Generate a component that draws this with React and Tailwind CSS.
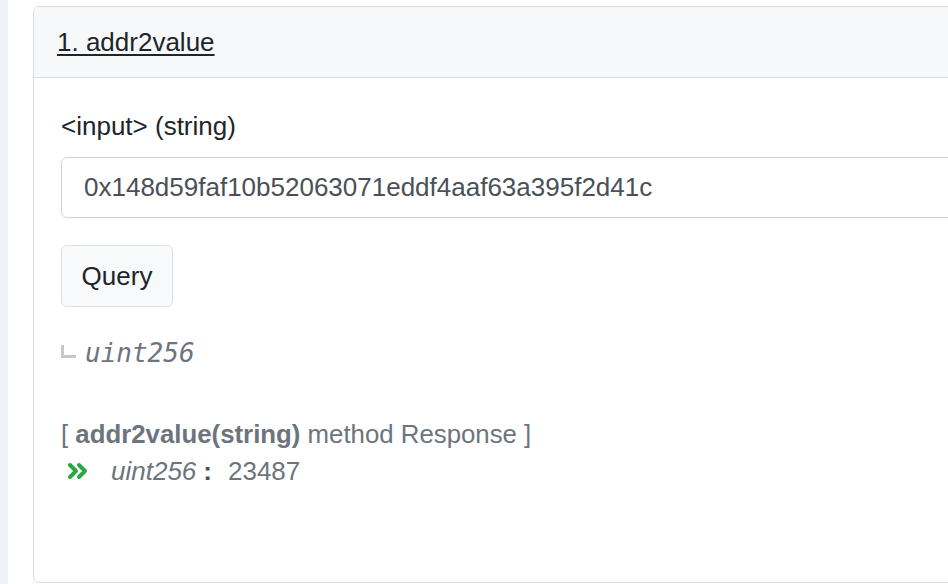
export default function App() {
  const sans = { fontFamily: '"Liberation Sans", Arial, sans-serif' };
  return (
    <div className="w-[948px] h-[584px] overflow-hidden flex bg-white" style={sans}>
      <div className="w-[8px] h-full bg-[#f0f2f5] shrink-0" />
      <div className="pl-[25px] pt-[6px] shrink-0">
        <div className="w-[1000px] h-[577px] border border-[#dddddd] rounded-[6px] overflow-hidden">
          <div className="h-[71px] bg-[#f7f8f9] border-b border-[#dddddd] px-[23px] flex items-center">
            <span className="text-[26px] leading-[30px] text-[#212529] underline underline-offset-[3px] decoration-[1.5px]">1. addr2value</span>
          </div>
          <div className="px-[27px] pt-[33px]">
            <div className="text-[26px] leading-[30px] text-[#212529]">&lt;input&gt; (string)</div>
            <div className="mt-[16px] h-[61px] w-[960px] border border-[#ced4da] rounded-[6px] pl-[22px] flex items-center text-[26px] text-[#495057]">
              0x148d59faf10b52063071eddf4aaf63a395f2d41c
            </div>
            <button className="mt-[27px] h-[62px] w-[112px] bg-[#f8f9fa] border border-[#dcdfe3] rounded-[6px] text-[26px] text-[#212529] flex items-center justify-center">
              Query
            </button>
            <div className="mt-[28px] h-[36px] flex items-center">
              <div className="w-[15px] h-[13px] border-l-[3px] border-b-[3px] border-[#c4c8ce] mt-[-4px]" />
              <span className="ml-[9px] text-[26px] italic text-[#6c757d]" style={{ fontFamily: '"DejaVu Sans Mono", monospace' }}>uint256</span>
            </div>
            <div className="mt-[48px] text-[25.8px] leading-[30px] text-[#6c757d]">
              [ <span className="font-bold">addr2value(string)</span> method Response ]
            </div>
            <div className="mt-[7px] h-[30px] flex items-center text-[26px] text-[#6c757d]">
              <svg width="22" height="18" viewBox="0 0 22 18" className="ml-[6px]" fill="none" stroke="#28a745" strokeWidth="4" strokeLinecap="round" strokeLinejoin="round">
                <polyline points="3,3 9,9 3,15" />
                <polyline points="12,3 18,9 12,15" />
              </svg>
              <span className="ml-[22px] italic">uint256</span>
              <span className="ml-[7px] font-bold text-[#495057]">:</span>
              <span className="ml-[16px]">23487</span>
            </div>
          </div>
        </div>
      </div>
    </div>
  );
}
